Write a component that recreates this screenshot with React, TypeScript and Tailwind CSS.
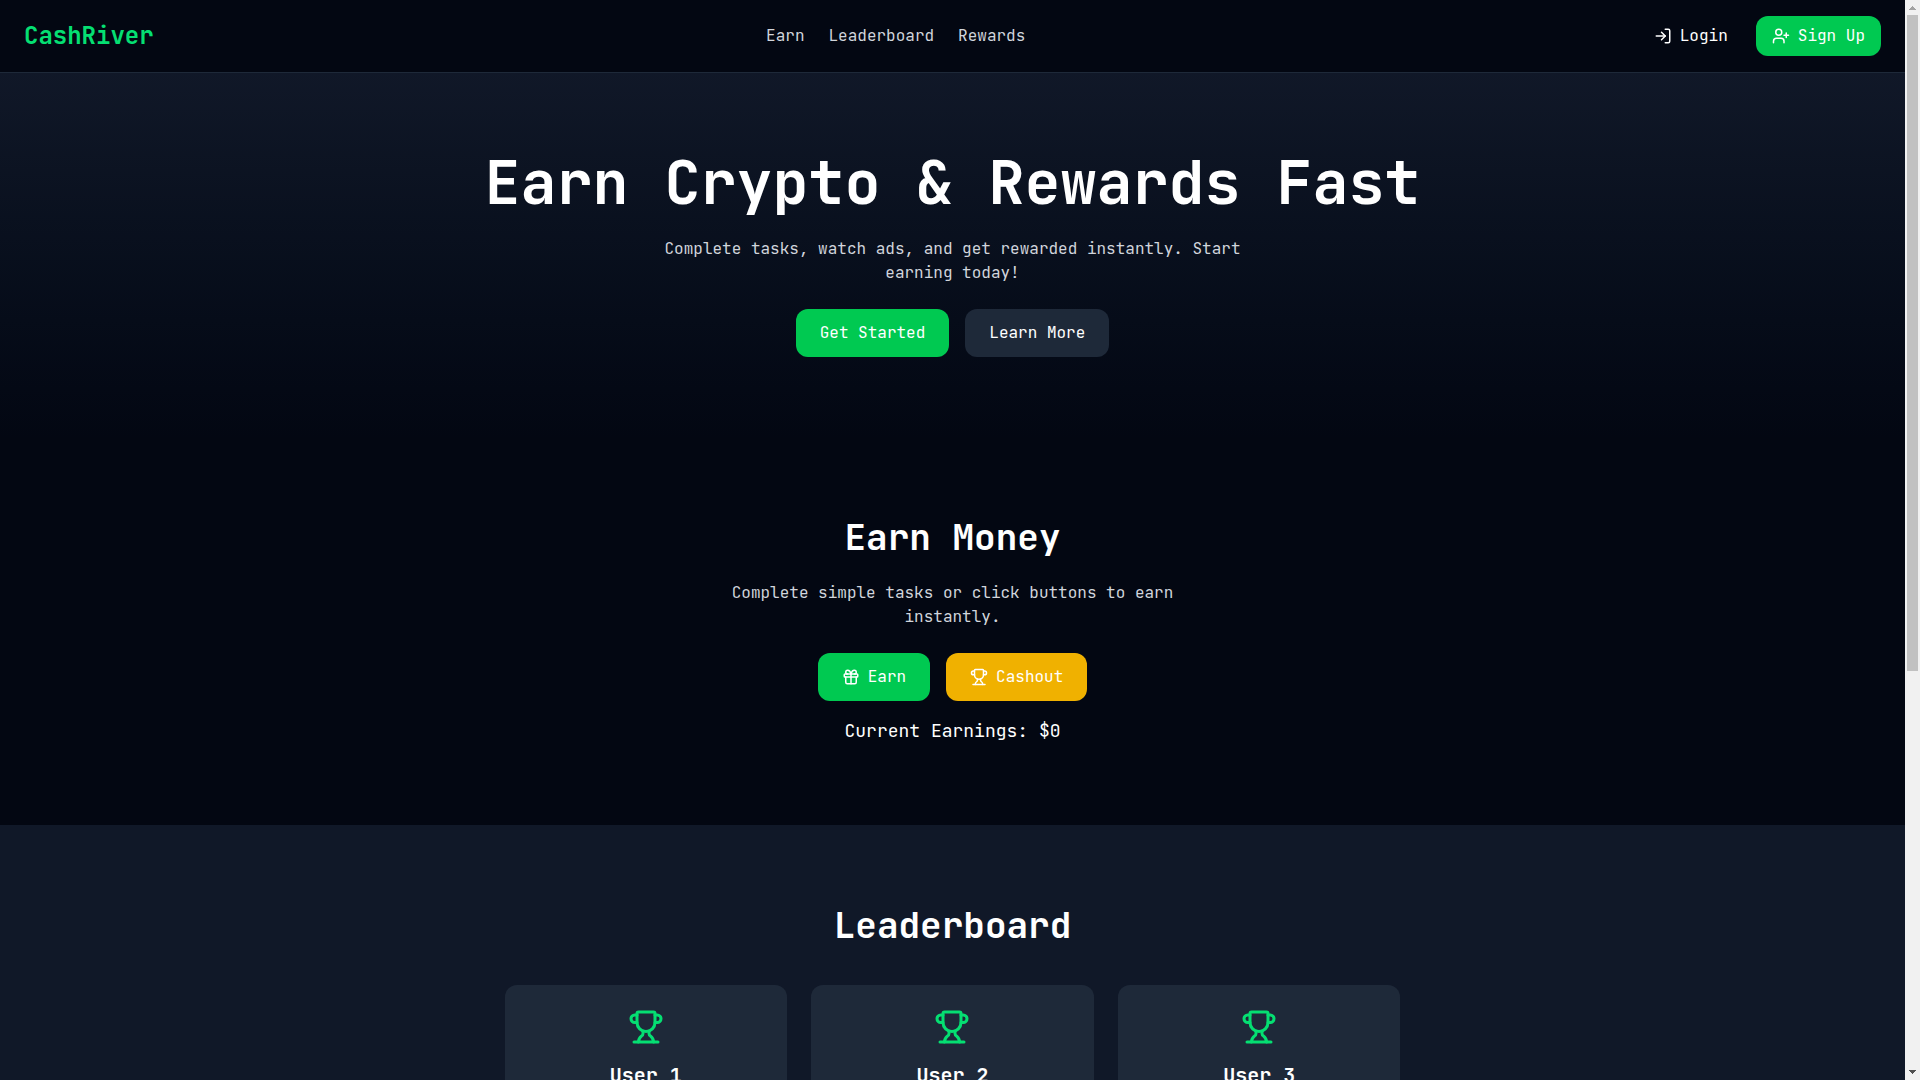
/**
 * CashRiver - landing page with earn actions and leaderboard.
 */
import { useState } from "react";
import { Gift, LogIn, Trophy, UserPlus } from "lucide-react";

const navLinks = [
  { label: "Earn", href: "#earn" },
  { label: "Leaderboard", href: "#leaderboard" },
  { label: "Rewards", href: "#rewards" },
];

const users = ["User 1", "User 2", "User 3"];

function Header() {
  return (
    <header className="flex items-center justify-between px-6 py-4 border-b border-gray-800">
      <a href="#" className="text-2xl font-bold text-green-400">CashRiver</a>
      <nav className="flex gap-6 text-gray-300">
        {navLinks.map((l) => (
          <a key={l.label} href={l.href} className="hover:text-white">{l.label}</a>
        ))}
      </nav>
      <div className="flex gap-3">
        <button className="flex items-center gap-2 px-4 py-2 rounded-xl">
          <LogIn size={18} /> Login
        </button>
        <button className="flex items-center gap-2 px-4 py-2 rounded-xl bg-green-500">
          <UserPlus size={18} /> Sign Up
        </button>
      </div>
    </header>
  );
}

function Hero() {
  return (
    <section className="flex flex-col items-center px-6 py-20 text-center bg-gradient-to-b from-gray-900 to-gray-950">
      <h1 className="mb-6 text-6xl font-bold">Earn Crypto &amp; Rewards Fast</h1>
      <p className="mb-6 max-w-xl text-gray-300">
        Complete tasks, watch ads, and get rewarded instantly. Start earning today!
      </p>
      <div className="flex gap-4">
        <button className="px-6 py-3 rounded-xl bg-green-500">Get Started</button>
        <button className="px-6 py-3 rounded-xl bg-gray-800">Learn More</button>
      </div>
    </section>
  );
}

function Earn() {
  const [earnings, setEarnings] = useState(0);

  return (
    <section id="earn" className="flex flex-col items-center px-6 py-20 text-center">
      <h2 className="mb-6 text-4xl font-bold">Earn Money</h2>
      <p className="mb-6 max-w-md text-gray-300">
        Complete simple tasks or click buttons to earn instantly.
      </p>
      <div className="flex gap-4">
        <button
          className="flex items-center gap-2 px-6 py-3 rounded-xl bg-green-500"
          onClick={() => setEarnings(earnings + 1)}
        >
          <Gift size={18} /> Earn
        </button>
        <button
          className="flex items-center gap-2 px-6 py-3 rounded-xl bg-yellow-500"
          onClick={() => setEarnings(0)}
        >
          <Trophy size={18} /> Cashout
        </button>
      </div>
      <p className="mt-4 text-lg">Current Earnings: ${earnings}</p>
    </section>
  );
}

function Leaderboard() {
  return (
    <section id="leaderboard" className="px-6 py-20 text-center bg-gray-900">
      <h2 className="mb-10 text-4xl font-bold">Leaderboard</h2>
      <div className="grid grid-cols-3 gap-6 max-w-4xl mx-auto">
        {users.map((name) => (
          <div key={name} className="p-6 rounded-xl bg-gray-800">
            <Trophy size={36} className="mx-auto mb-4 text-green-400" />
            <h3 className="text-xl font-semibold">{name}</h3>
          </div>
        ))}
      </div>
    </section>
  );
}

// Scroll track with arrow ends, shown beside the page content
function ScrollTrack() {
  return (
    <div aria-hidden="true" className="flex flex-col items-center w-[15px] shrink-0 bg-[#f1f1f1]">
      <svg width="15" height="15" viewBox="0 0 15 15" className="shrink-0" fill="#a3a3a3" shapeRendering="crispEdges">
        <path d="M7 6h1v1h1v1h1v1h1v1H4V9h1V8h1V7h1z" />
      </svg>
      <div className="flex flex-col flex-1 w-[11px]">
        <div className="basis-5/8 bg-[#c1c1c1]" />
      </div>
      <svg width="15" height="15" viewBox="0 0 15 15" className="shrink-0" fill="#505050" shapeRendering="crispEdges">
        <path d="M4 5h7v1h-1v1H9v1H8v1H7V8H6V7H5V6H4z" />
      </svg>
    </div>
  );
}

export default function App() {
  return (
    <div className="flex h-screen bg-gray-950 text-white font-['JetBrains_Mono','DejaVu_Sans_Mono',monospace]">
      <main className="flex-1 overflow-y-auto [scrollbar-width:none]">
        <Header />
        <Hero />
        <Earn />
        <Leaderboard />
      </main>
      <ScrollTrack />
    </div>
  );
}
